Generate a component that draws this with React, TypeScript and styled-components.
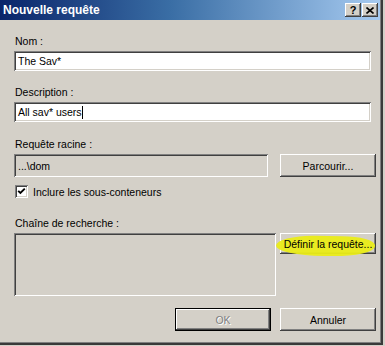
import React from 'react';
import styled, { createGlobalStyle } from 'styled-components';

const GlobalStyle = createGlobalStyle`
  body {
    margin: 0;
    background: #d4d0c8;
    font-family: "Liberation Sans", Arial, sans-serif;
  }
`;

const raised = `
  box-shadow: inset -1px -1px #404040, inset 1px 1px #ffffff, inset -2px -2px #808080, inset 2px 2px #d4d0c8;
`;

const sunken = `
  box-shadow: inset 1px 1px #808080, inset -1px -1px #ffffff, inset 2px 2px #404040, inset -2px -2px #d4d0c8;
`;

const Window = styled.div`
  width: 383px;
  height: 345px;
  box-sizing: border-box;
  padding: 0 3px 3px 0;
  background: #d4d0c8;
  box-shadow: inset -2px -2px #3a3a3a, inset -3px -3px #808080;
  display: flex;
  flex-direction: column;
`;

const TitleBar = styled.div`
  height: 20px;
  display: flex;
  align-items: center;
  justify-content: space-between;
  padding: 0 2px 0 3px;
  background: linear-gradient(to right, #0a246a, #3a6ea5 45%, #a6caf0);
`;

const Title = styled.span`
  color: #ffffff;
  font-weight: bold;
  font-size: 12px;
`;

const CaptionButtons = styled.div`
  display: flex;
  gap: 1px;
`;

const CaptionButton = styled.div`
  width: 16px;
  height: 14px;
  background: #d4d0c8;
  ${raised}
  display: flex;
  align-items: center;
  justify-content: center;
  font-weight: bold;
  font-size: 11px;
  color: #000;
`;

const Body = styled.div`
  flex: 1;
  display: flex;
  flex-direction: column;
  padding: 15px 4px 0 14px;
`;

const Label = styled.div<{ $top?: number }>`
  margin-top: ${({ $top }) => $top ?? 0}px;
  margin-left: 1px;
  height: 13px;
  line-height: 13px;
  font-size: 10.5px;
  color: #000;
`;

const TextBox = styled.div<{ $disabled?: boolean; $width?: number; $height?: number }>`
  box-sizing: border-box;
  height: ${({ $height }) => $height ?? 20}px;
  width: ${({ $width }) => ($width ? `${$width}px` : 'auto')};
  margin-right: ${({ $width }) => ($width ? 0 : 5)}px;
  background: ${({ $disabled }) => ($disabled ? '#d4d0c8' : '#ffffff')};
  ${sunken}
  padding: 0 4px;
  display: flex;
  align-items: center;
  font-size: 10.5px;
  color: #000;
  white-space: pre;
`;

const Field = styled(TextBox)`
  margin-top: 3px;
`;

const Caret = styled.span`
  display: inline-block;
  width: 1px;
  height: 13px;
  background: #000;
`;

const Row = styled.div<{ $top: number }>`
  margin-top: ${({ $top }) => $top}px;
  display: flex;
  align-items: flex-start;
  justify-content: space-between;
`;

const Button = styled.div<{ $height?: number; $disabled?: boolean; $default?: boolean }>`
  position: relative;
  box-sizing: border-box;
  width: 96px;
  height: ${({ $height }) => $height ?? 23}px;
  background: #d4d0c8;
  box-shadow: ${({ $default }) =>
    $default
      ? 'inset 0 0 0 1px #000, inset -2px -2px #404040, inset 2px 2px #ffffff, inset -3px -3px #808080'
      : 'inset -1px -1px #404040, inset 1px 1px #ffffff, inset -2px -2px #808080, inset 2px 2px #d4d0c8'};
  display: flex;
  align-items: center;
  justify-content: center;
  font-size: 10.5px;
  color: ${({ $disabled }) => ($disabled ? '#808080' : '#000')};
  text-shadow: ${({ $disabled }) => ($disabled ? '1px 1px #ffffff' : 'none')};
`;

const ButtonText = styled.span`
  position: relative;
  z-index: 1;
`;

const Highlight = styled.span`
  position: absolute;
  left: -4px;
  top: 3px;
  width: 99px;
  height: 20px;
  background: #eaec18;
  opacity: 0.95;
  border-radius: 40% 35% 45% 50% / 55% 45% 55% 50%;
  transform: rotate(0.8deg);
  pointer-events: none;
`;

const CheckRow = styled.div`
  margin-top: 8px;
  display: flex;
  align-items: center;
  gap: 5px;
  font-size: 10.5px;
  color: #000;
  margin-left: 1px;
  height: 13px;
`;

const CheckBox = styled.div`
  width: 13px;
  height: 13px;
  box-sizing: border-box;
  background: #ffffff;
  ${sunken}
  display: flex;
  align-items: center;
  justify-content: center;
`;

const Footer = styled.div`
  margin-top: auto;
  margin-bottom: 11px;
  display: flex;
  justify-content: flex-end;
  gap: 9px;
`;

export default function App() {
  return (
    <>
      <GlobalStyle />
      <Window>
        <TitleBar>
          <Title>Nouvelle requête</Title>
          <CaptionButtons>
            <CaptionButton>?</CaptionButton>
            <CaptionButton>
              <svg width="8" height="7" viewBox="0 0 8 7">
                <path d="M0.5 0.5 L7.5 6.5 M7.5 0.5 L0.5 6.5" stroke="#000" strokeWidth="1.6" />
              </svg>
            </CaptionButton>
          </CaptionButtons>
        </TitleBar>
        <Body>
          <Label>Nom :</Label>
          <Field>The Sav*</Field>
          <Label $top={15}>Description :</Label>
          <Field>
            All sav* users
            <Caret />
          </Field>
          <Label $top={16}>Requête racine :</Label>
          <Row $top={3}>
            <TextBox $disabled $width={254} $height={23}>
              ...\dom
            </TextBox>
            <Button>Parcourir...</Button>
          </Row>
          <CheckRow>
            <CheckBox>
              <svg width="9" height="9" viewBox="0 0 9 9">
                <path d="M1.2 3.8 L3.4 6 L7.8 1.6" stroke="#000" strokeWidth="1.9" fill="none" />
              </svg>
            </CheckBox>
            Inclure les sous-conteneurs
          </CheckRow>
          <Label $top={19}>Chaîne de recherche :</Label>
          <Row $top={3}>
            <TextBox $disabled $width={262} $height={63} />
            <Button $height={21}>
              <Highlight />
              <ButtonText>Définir la requête...</ButtonText>
            </Button>
          </Row>
          <Footer>
            <Button $disabled $default>
              OK
            </Button>
            <Button>Annuler</Button>
          </Footer>
        </Body>
      </Window>
    </>
  );
}
